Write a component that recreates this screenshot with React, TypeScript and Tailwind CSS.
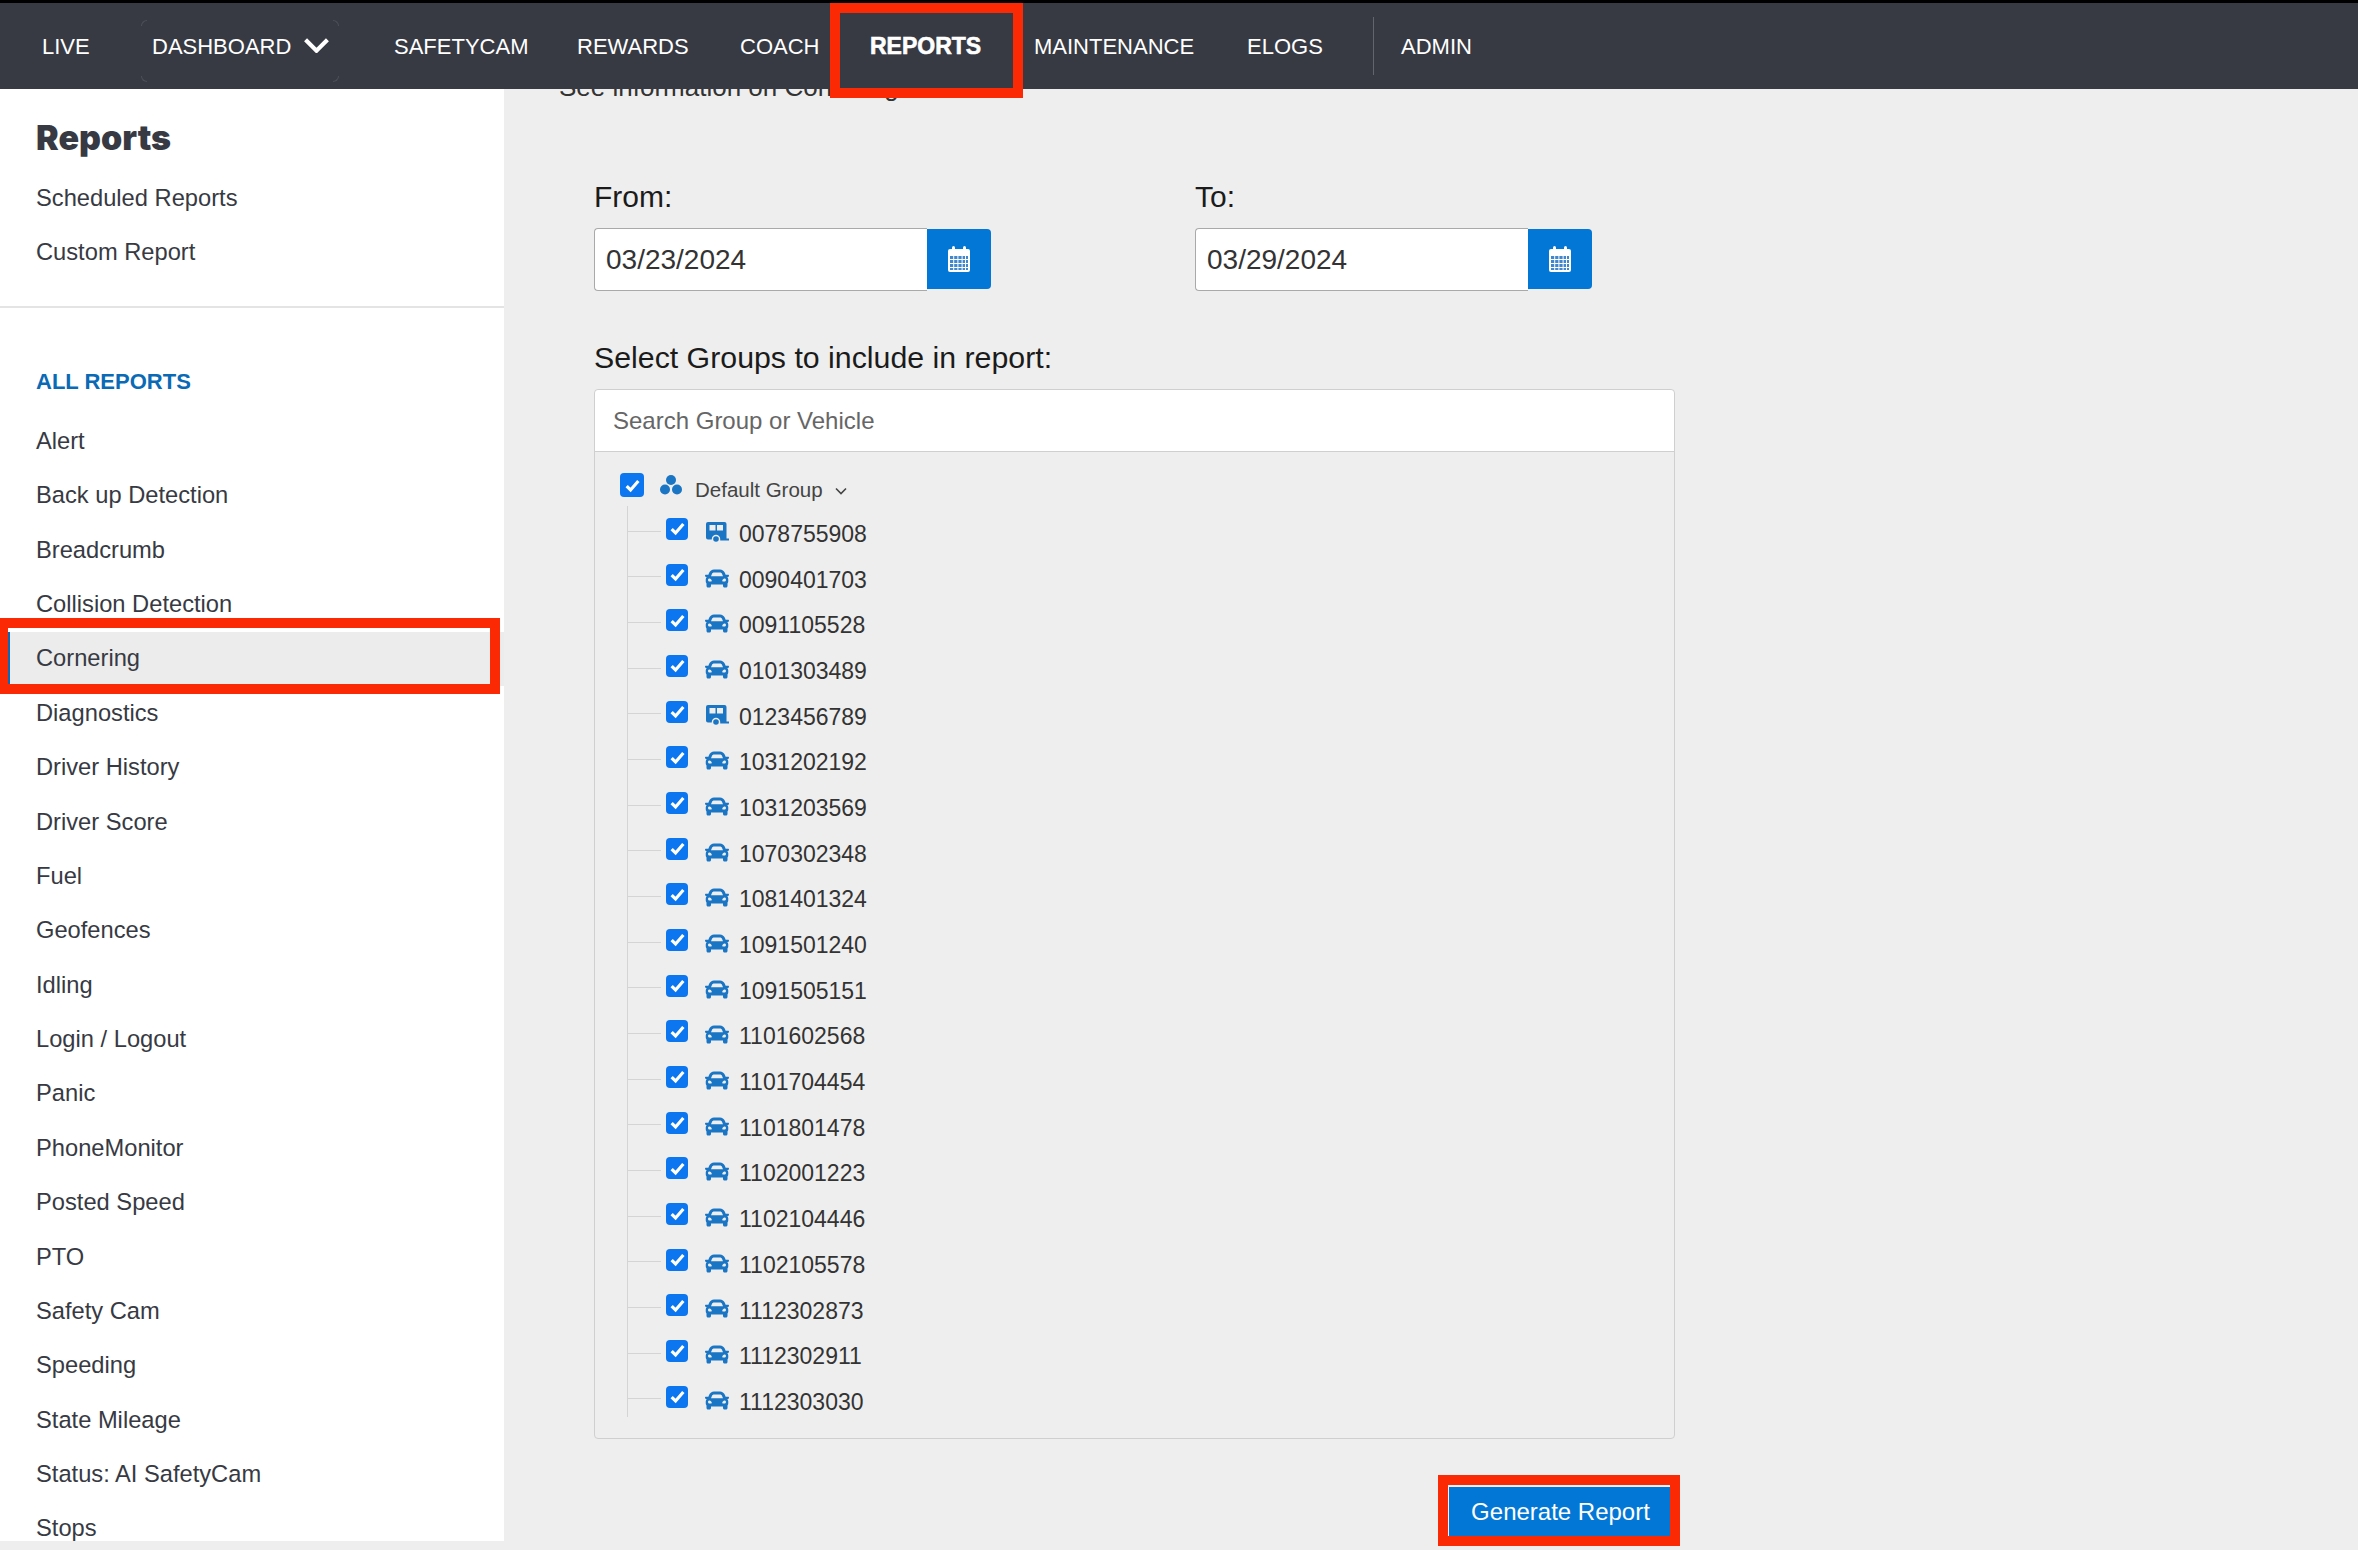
import { FaCar } from "react-icons/fa"

const font = "font-['Liberation_Sans',Arial,sans-serif]"

const navItems = [
  { label: "LIVE", width: "w-[110px]" },
  { label: "DASHBOARD", width: "w-[242px]", caret: true },
  { label: "SAFETYCAM", width: "w-[183px]" },
  { label: "REWARDS", width: "w-[163px]" },
  { label: "COACH", width: "w-[130px]" },
  { label: "REPORTS", width: "w-[164px]", active: true },
  { label: "MAINTENANCE", width: "w-[213px]" },
  { label: "ELOGS", width: "w-[126px]" },
]

const reports = [
  "Alert",
  "Back up Detection",
  "Breadcrumb",
  "Collision Detection",
  "Cornering",
  "Diagnostics",
  "Driver History",
  "Driver Score",
  "Fuel",
  "Geofences",
  "Idling",
  "Login / Logout",
  "Panic",
  "PhoneMonitor",
  "Posted Speed",
  "PTO",
  "Safety Cam",
  "Speeding",
  "State Mileage",
  "Status: AI SafetyCam",
  "Stops",
]

const vehicles = [
  { id: "0078755908", trailer: true },
  { id: "0090401703" },
  { id: "0091105528" },
  { id: "0101303489" },
  { id: "0123456789", trailer: true },
  { id: "1031202192" },
  { id: "1031203569" },
  { id: "1070302348" },
  { id: "1081401324" },
  { id: "1091501240" },
  { id: "1091505151" },
  { id: "1101602568" },
  { id: "1101704454" },
  { id: "1101801478" },
  { id: "1102001223" },
  { id: "1102104446" },
  { id: "1102105578" },
  { id: "1112302873" },
  { id: "1112302911" },
  { id: "1112303030" },
]

function Checkbox({ size }: { size: string }) {
  return (
    <span className={`flex shrink-0 items-center justify-center rounded-[4px] bg-[#0b76ef] ${size}`}>
      <svg viewBox="0 0 16 16" className="h-[17px] w-[17px]" fill="none" stroke="#fff" strokeWidth="3">
        <path d="M2.5 8.5 6.2 12.2 13.5 3.8" />
      </svg>
    </span>
  )
}

function CalendarIcon() {
  return (
    <svg viewBox="0 0 22 26" className="h-[26px] w-[22px]" fill="#fff">
      <rect x="0" y="3" width="22" height="23" rx="2" />
      <rect x="4" y="0" width="3" height="6" rx="1.5" />
      <rect x="15" y="0" width="3" height="6" rx="1.5" />
      <rect x="2" y="10" width="18" height="14" fill="#3f87cf" />
      <g fill="#fff">
        <rect x="5.2" y="10" width="1" height="14" />
        <rect x="9.4" y="10" width="1" height="14" />
        <rect x="13.6" y="10" width="1" height="14" />
        <rect x="17" y="10" width="1" height="14" />
        <rect x="2" y="13" width="18" height="1" />
        <rect x="2" y="17" width="18" height="1" />
        <rect x="2" y="21" width="18" height="1" />
      </g>
    </svg>
  )
}

function TrailerIcon() {
  return (
    <svg viewBox="0 0 23 20" className="h-[20px] w-[23px]" fill="#1a75c4">
      <path d="M2 0h16.5a2 2 0 0 1 2 2v14.5H23v2h-8.8v-1.5a4.2 4.2 0 0 0-8.4 0v.5H2a2 2 0 0 1-2-2V2a2 2 0 0 1 2-2Z" />
      <rect x="3.5" y="3" width="6" height="5.5" fill="#eeeeee" />
      <rect x="11" y="3" width="6" height="5.5" fill="#eeeeee" />
      <circle cx="10" cy="17" r="2.8" />
    </svg>
  )
}

function DateField({ label, value, inputWidth, className }: { label: string; value: string; inputWidth: string; className?: string }) {
  return (
    <div className={className}>
      <div className="text-[30px] leading-[40px] text-[#1b1b1b]">{label}</div>
      <div className="mt-[11px] flex items-start">
        <div className={`flex h-[63px] items-center rounded-l-[4px] border border-r-0 border-[#a9a9a9] bg-white pl-[11px] text-[28px] text-[#333] ${inputWidth}`}>
          {value}
        </div>
        <button className="mt-px flex h-[60px] w-[64px] items-center justify-center rounded-r-[4px] bg-[#0277d6]">
          <CalendarIcon />
        </button>
      </div>
    </div>
  )
}

function VehicleRow({ id, trailer }: { id: string; trailer?: boolean }) {
  return (
    <div className="relative flex h-[45.68px] items-center pl-[71px]">
      <span className="absolute left-[32px] top-[19px] h-px w-[34px] bg-[#d4d4d4]" />
      <span className="-mt-[11px]">
        <Checkbox size="h-[22px] w-[22px]" />
      </span>
      <span className="-mt-[4px] ml-[17px] flex w-[24px] justify-center text-[#1a75c4]">
        {trailer ? <TrailerIcon /> : <FaCar className="h-[25px] w-[25px]" />}
      </span>
      <span className="ml-[10px] text-[23px] text-[#333]">{id}</span>
    </div>
  )
}

export default function App() {
  return (
    <div className={`relative h-[1550px] w-[2358px] overflow-hidden bg-[#eeeeee] ${font}`}>
      <header className="relative z-10 flex h-[89px] items-center border-t-[3px] border-black bg-[#373a43] pl-[42px] text-[22px] text-white">
        {navItems.map((item) => (
          <div
            key={item.label}
            className={`relative flex items-center ${item.width} ${item.active ? "text-[23px] font-bold [-webkit-text-stroke:0.6px_white]" : ""}`}
          >
            {item.label}
            {item.caret && (
              <>
                <svg viewBox="0 0 24 14" className="-mt-[2px] ml-[13px] h-[15px] w-[25px]" fill="none" stroke="#fff" strokeWidth="4">
                  <path d="M1.5 1.5 12 12 22.5 1.5" />
                </svg>
                {/* faint focus-ring corners */}
                <span className="absolute -left-[11px] -top-[10px] h-[6px] w-[6px] rounded-tl-[6px] border-l border-t border-[#4c4f58]" />
                <span className="absolute -top-[10px] left-[181px] h-[6px] w-[6px] rounded-tr-[6px] border-r border-t border-[#4c4f58]" />
                <span className="absolute -bottom-[19px] -left-[11px] h-[6px] w-[6px] rounded-bl-[6px] border-b border-l border-[#4c4f58]" />
                <span className="absolute -bottom-[19px] left-[181px] h-[6px] w-[6px] rounded-br-[6px] border-b border-r border-[#4c4f58]" />
              </>
            )}
          </div>
        ))}
        <span className="h-[58px] w-px bg-[#62656d]" />
        <div className="ml-[27px]">ADMIN</div>
      </header>

      {/* Annotation boxes */}
      <div className="absolute left-[830px] top-[3px] z-20 h-[95px] w-[193px] border-[10px] border-[#fb2a05]" />
      <div className="absolute left-0 top-[618px] z-20 h-[76px] w-[500px] border-[10px] border-l-[8px] border-[#fb2a05]" />
      <div className="absolute left-[1438px] top-[1475px] z-20 h-[71px] w-[242px] border-[10px] border-[#fb2a05]" />

      <div className="flex">
        <aside className="h-[1452px] w-[504px] shrink-0 overflow-hidden bg-white text-[#373a43]">
          <div className="border-b-2 border-[#e4e4e4] pb-[26px]">
            <h1 className="mt-[29px] h-[40px] pl-[36px] font-['Inter',sans-serif] text-[34px] font-black leading-[40px]">Reports</h1>
            <div className="mt-[14px] flex h-[54px] items-center pl-[36px] text-[23.7px]">Scheduled Reports</div>
            <div className="flex h-[54px] items-center pl-[36px] text-[23.7px]">Custom Report</div>
          </div>
          <div className="mt-[53.5px] h-[40px] pl-[36px] text-[22px] font-bold leading-[40px] text-[#0a6ab5]">ALL REPORTS</div>
          <div className="mt-[13px]">
            {reports.map((name) => (
              <div
                key={name}
                className={`relative flex h-[54.38px] items-center pl-[36px] text-[23.7px] ${name === "Cornering" ? "bg-[#ececec]" : ""}`}
              >
                {name === "Cornering" && <span className="absolute bottom-0 left-[8px] top-0 w-[2px] bg-[#0a6ab5]" />}
                {name}
              </div>
            ))}
          </div>
        </aside>

        <main className="min-w-0 flex-1 pl-[90px]">
          <div className="-ml-[35px] -mt-[17px] text-[26px] leading-[30px] text-[#333]">See information on Cornering</div>

          <div className="mt-[75px] flex">
            <DateField label="From:" value="03/23/2024" inputWidth="w-[333px]" className="w-[601px]" />
            <DateField label="To:" value="03/29/2024" inputWidth="w-[333px]" />
          </div>

          <div className="mt-[47px] text-[30.3px] leading-[40px] text-[#1b1b1b]">Select Groups to include in report:</div>

          <div className="mt-[11px] h-[1050px] w-[1081px] rounded-[4px] border border-[#cfcfcf]">
            <div className="flex h-[62px] items-center rounded-t-[4px] border-b border-[#cfcfcf] bg-white pl-[18px] text-[24px] text-[#666]">
              Search Group or Vehicle
            </div>
            <div className="relative pt-[22.5px]">
              <span className="absolute bottom-[8px] left-[32px] top-[54px] w-px bg-[#d4d4d4]" />
              <div className="flex h-[37px] items-start pl-[25px]">
                <span className="-mt-[1.5px]">
                  <Checkbox size="h-[24px] w-[24px]" />
                </span>
                <svg viewBox="0 0 22 20" className="ml-[16px] h-[20px] w-[22px]" fill="#1a75c4">
                  <circle cx="11" cy="5" r="5" />
                  <circle cx="5" cy="14.5" r="5" />
                  <circle cx="17" cy="14.5" r="5" />
                </svg>
                <span className="ml-[13px] text-[20.5px] leading-[30px] text-[#444]">Default Group</span>
                <svg viewBox="0 0 12 8" className="ml-[12px] mt-[12px] h-[8px] w-[12px]" fill="none" stroke="#444" strokeWidth="1.6">
                  <path d="M1 1.5 6 6.5 11 1.5" />
                </svg>
              </div>
              {vehicles.map((v) => (
                <VehicleRow key={v.id} id={v.id} trailer={v.trailer} />
              ))}
            </div>
          </div>

          <div className="mt-[47.5px] flex w-[1078px] justify-end">
            <button className="h-[51px] w-[223px] bg-[#0277d6] text-[24px] text-white">Generate Report</button>
          </div>
        </main>
      </div>
    </div>
  )
}
